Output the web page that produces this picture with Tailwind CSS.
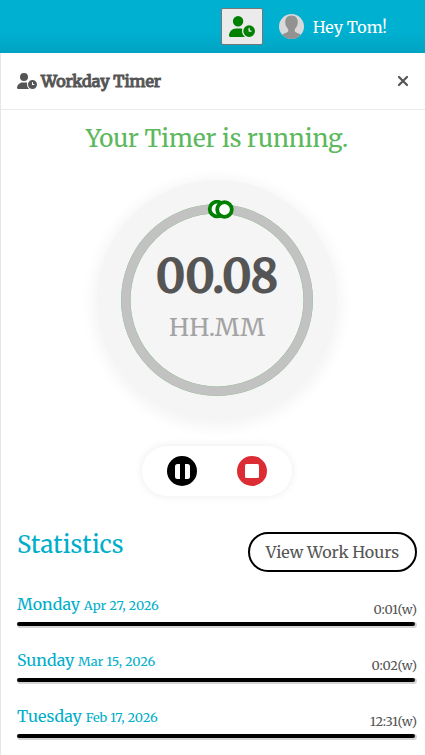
<!DOCTYPE html>
<html lang="en">
<head>
<meta charset="utf-8">
<meta name="viewport" content="width=device-width, initial-scale=1">
<title>Workday Timer</title>
<script src="https://cdn.jsdelivr.net/npm/@tailwindcss/browser@4"></script>
</head>
<body class="flex min-h-screen flex-col overflow-x-hidden bg-white font-['Merriweather','DejaVu_Serif_Condensed','DejaVu_Serif',serif] text-[#555]">
<svg class="hidden" aria-hidden="true">
  <symbol id="user-clock" viewBox="0 0 640 512"><path d="M224 0a128 128 0 1 1 0 256A128 128 0 1 1 224 0zM178.3 304h91.4c20.6 0 40.4 3.5 58.8 9.9C323 331 320 349.1 320 368c0 59.5 29.5 112.1 74.8 144H29.7C13.3 512 0 498.7 0 482.3C0 383.8 79.8 304 178.3 304zM352 368a144 144 0 1 1 288 0 144 144 0 1 1 -288 0zm144-80c-8.8 0-16 7.2-16 16v64c0 8.8 7.2 16 16 16h48c8.8 0 16-7.2 16-16s-7.2-16-16-16H512V304c0-8.8-7.2-16-16-16z"/></symbol>
</svg>
<header class="flex h-[53px] items-center justify-end bg-linear-to-b from-[#00b0d0] from-60% to-[#00a3c1] pr-[38px]">
  <button type="button" aria-label="Workday timer" class="flex h-[37px] w-[42px] items-center justify-center rounded-[2px] border border-[#767676] bg-[#ebebeb] text-[#008000]">
    <svg class="h-[21px] w-[26px]" fill="currentColor"><use href="#user-clock"/></svg>
  </button>
  <a href="#" class="ml-4 flex items-center gap-[9px] text-base text-white">
    <svg class="size-[25px]" viewBox="0 0 25 25" aria-hidden="true">
      <defs><clipPath id="avatar"><circle cx="12.5" cy="12.5" r="12.5"/></clipPath></defs>
      <g clip-path="url(#avatar)"><rect width="25" height="25" fill="#d9d9d9"/><path fill="#929292" d="M12.5 1.5c-4 0-6.3 2.800-6.300 6.500 0 3 1.300 5.500 3 7v2.500c-1.500 1.500-5 1.800-6.200 3.500L2 25h21l-1-4c-1.200-1.700-4.700-2-6.200-3.500V15c1.700-1.500 3-4 3-7 0-3.700-2.300-6.500-6.300-6.500z"/></g>
    </svg>
    <span>Hey Tom!</span>
  </a>
</header>
<main class="grow border-l border-[#e6e6e6]">
  <div class="flex h-[57px] items-center justify-between border-b border-[#e9e9e9] pr-4 pl-4">
    <h1 class="flex items-center gap-1 text-base font-normal [-webkit-text-stroke:1px]">
      <svg class="h-4 w-5" fill="currentColor" aria-hidden="true"><use href="#user-clock"/></svg>
      Workday Timer
    </h1>
    <button type="button" aria-label="Close" class="flex size-3 items-center justify-center">
      <svg class="size-3" viewBox="0 0 12 12" fill="none" stroke="currentColor" stroke-width="2.200" stroke-linecap="round"><path d="M2 2l8 8M10 2l-8 8"/></svg>
    </button>
  </div>
  <section class="flex flex-col items-center pr-2 pl-4">
    <h2 class="mt-3 text-2xl leading-[34px] text-[#5cb85c]">Your Timer is running.</h2>
    <div class="mt-6 grid size-[240px] place-items-center rounded-full bg-[#f5f5f5] shadow-[0_3px_14px_5px_#f5f5f5]">
      <svg class="col-start-1 row-start-1 size-[200px]" viewBox="0 0 200 200" fill="none" aria-hidden="true">
        <circle cx="100" cy="100" r="91.200" stroke="#8dbb8d" stroke-width="9.600"/>
        <circle cx="100" cy="100" r="91.200" stroke="#c2c2c2" stroke-width="9"/>
        <circle cx="100" cy="9" r="7.300" fill="#fff" stroke="#008000" stroke-width="3.800"/>
        <circle cx="107.500" cy="9.500" r="7.300" fill="#fff" stroke="#008000" stroke-width="3.800"/>
      </svg>
      <div class="col-start-1 row-start-1 flex flex-col items-center pb-1">
        <span class="text-[45px] leading-[58px] font-normal [-webkit-text-stroke:2px]">00.08</span>
        <span class="text-[25px] leading-[44px] text-[#a3a3a3]">HH.MM</span>
      </div>
    </div>
    <div class="mt-[26px] flex h-[50px] w-[150px] items-center justify-center gap-10 rounded-full bg-white shadow-[0_0_10px_#ececec]">
      <button type="button" aria-label="Pause timer" class="rounded-full">
        <svg class="size-[30px]" viewBox="0 0 30 30"><circle cx="15" cy="15" r="15"/><rect x="8" y="8" width="15" height="15" rx="2.500" fill="#fff"/><rect x="13" y="7" width="5" height="17"/></svg>
      </button>
      <button type="button" aria-label="Stop timer" class="rounded-full">
        <svg class="size-[30px]" viewBox="0 0 30 30"><circle cx="15" cy="15" r="15" fill="#dc2d35"/><rect x="8" y="8" width="14" height="14" rx="1.500" fill="#fff"/></svg>
      </button>
    </div>
  </section>
  <section class="mt-9 pr-2 pl-4">
    <div class="flex items-start justify-between">
      <h2 class="text-2xl leading-[26px] text-[#00aeca]">Statistics</h2>
      <button type="button" class="h-10 rounded-full border-2 border-black px-4 text-base">View Work Hours</button>
    </div>
    <ul class="mt-5">
      <li class="h-14">
        <div class="flex h-[30px] items-start justify-between"><span class="leading-6 text-[#00aeca]">Monday <small class="text-[80%]">Apr 27, 2026</small></span><small class="pt-2 text-[80%]">0:01(w)</small></div>
        <div class="h-[6px] rounded-full bg-[#d4d4d4] pr-[2px]"><div class="h-1 rounded-full bg-black"></div></div>
      </li>
      <li class="h-14">
        <div class="flex h-[30px] items-start justify-between"><span class="leading-6 text-[#00aeca]">Sunday <small class="text-[80%]">Mar 15, 2026</small></span><small class="pt-2 text-[80%]">0:02(w)</small></div>
        <div class="h-[6px] rounded-full bg-[#d4d4d4] pr-[2px]"><div class="h-1 rounded-full bg-black"></div></div>
      </li>
      <li>
        <div class="flex h-[30px] items-start justify-between"><span class="leading-6 text-[#00aeca]">Tuesday <small class="text-[80%]">Feb 17, 2026</small></span><small class="pt-2 text-[80%]">12:31(w)</small></div>
        <div class="h-[6px] rounded-full bg-[#d4d4d4] pr-[2px]"><div class="h-1 rounded-full bg-black"></div></div>
      </li>
    </ul>
  </section>
</main>
</body>
</html>
